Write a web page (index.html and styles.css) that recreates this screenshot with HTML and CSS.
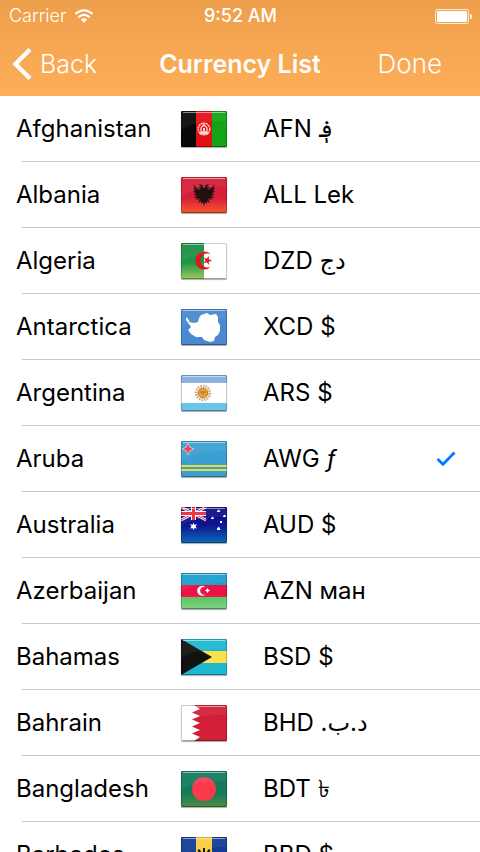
FILE: index.html
```
<!DOCTYPE html>
<html lang="en">
<head>
<meta charset="utf-8">
<meta name="viewport" content="width=device-width, initial-scale=1">
<title>Currency List</title>
<link rel="stylesheet" href="styles.css">
</head>
<body>
<svg class="defs" width="0" height="0" aria-hidden="true">
  <defs>
    <linearGradient id="glow" x1="0" y1="0" x2="0" y2="1">
      <stop offset="0.6" stop-color="#fff" stop-opacity="0"/>
      <stop offset="1" stop-color="#fff" stop-opacity="0.25"/>
    </linearGradient>
    <linearGradient id="red-orange" x1="0" y1="0" x2="0" y2="1">
      <stop offset="0" stop-color="#d31c37"/><stop offset="0.6" stop-color="#d8203a"/><stop offset="1" stop-color="#f4592c"/>
    </linearGradient>
    <linearGradient id="green-lime" x1="0" y1="0" x2="0" y2="1">
      <stop offset="0" stop-color="#158a40"/><stop offset="0.55" stop-color="#229647"/><stop offset="1" stop-color="#9aca5c"/>
    </linearGradient>
    <linearGradient id="navy" x1="0" y1="0" x2="0" y2="1">
      <stop offset="0" stop-color="#0c0c86"/><stop offset="0.5" stop-color="#0e1490"/><stop offset="1" stop-color="#0a6cba"/>
    </linearGradient>
    <linearGradient id="bd-green" x1="0" y1="0" x2="0" y2="1">
      <stop offset="0" stop-color="#107a5e"/><stop offset="0.6" stop-color="#147b58"/><stop offset="1" stop-color="#4d8b42"/>
    </linearGradient>
    <g id="gloss">
      <path d="M0 19Q16 9 46 10V0H0Z" fill="#fff" opacity="0.06"/>
      <path d="M2 1.5H44" stroke="#fff" opacity="0.5"/>
      <rect x="0.5" y="0.5" width="45" height="35" rx="0.5" fill="none" stroke="#000" opacity="0.2"/>
      <path d="M1 35.5H45" stroke="#000" opacity="0.2"/>
    </g>
  </defs>
</svg>
<div class="app">
  <header class="top">
    <div class="status">
      <div class="carrier">
        <span>Carrier</span>
        <svg width="20" height="14" viewBox="0 0 20 14" aria-hidden="true">
          <g fill="none" stroke="#fff" stroke-width="2"><path d="M1.3 5.1Q10 -2.6 18.7 5.1"/><path d="M4.2 8.3Q10 3.4 15.8 8.3"/></g>
          <path d="M6.7 10.5Q10 7.8 13.3 10.5L10 13.8Z" fill="#fff"/>
        </svg>
      </div>
      <time class="time">9:52 AM</time>
      <svg class="battery" width="37" height="15" viewBox="0 0 37 15" aria-hidden="true">
        <rect x="0.5" y="0.5" width="33" height="14" rx="2" fill="none" stroke="#fff" opacity="0.8"/>
        <rect x="2" y="2" width="30" height="11" rx="1" fill="#fff"/>
        <path d="M35 5Q37 5 37 7.5T35 10Z" fill="#fff"/>
      </svg>
    </div>
    <nav class="bar">
      <button class="back" type="button">
        <svg width="20" height="32" viewBox="0 0 20 32" aria-hidden="true"><path d="M18 1.5L3.5 16L18 30.5" fill="none" stroke="#fff" stroke-width="4.4"/></svg>
        <span>Back</span>
      </button>
      <h1 class="title">Currency List</h1>
      <button class="done" type="button">Done</button>
    </nav>
  </header>
  <main class="scroller">
    <ul class="list">
      <li class="item"><button class="row" type="button">
        <span class="name">Afghanistan</span>
        <svg class="flag" viewBox="0 0 46 36" aria-hidden="true">
          <path fill="#080808" d="M0 0H15V36H0Z"/><path fill="#e20f16" d="M15 0H31V36H15Z"/><path fill="#12a316" d="M31 0H46V36H31Z"/>
          <circle cx="23" cy="18" r="5.8" fill="none" stroke="#f6c9bb" stroke-width="1.6" stroke-dasharray="2 .6"/>
          <path d="M20 21V17Q23 12 26 17V21ZM23 14V12M18.500 22.500H27.500" fill="none" stroke="#f9ddd0" stroke-width="1.3"/><path d="M22 17H24V20H22Z" fill="#f9ddd0"/>
          <use href="#gloss"/>
        </svg>
        <span class="money">AFN <bdi>؋</bdi></span>
      </button></li>
      <li class="item"><button class="row" type="button">
        <span class="name">Albania</span>
        <svg class="flag" viewBox="0 0 46 36" aria-hidden="true">
          <path fill="url(#red-orange)" d="M0 0H46V36H0Z"/>
          <path fill="#21100f" d="M23 12L21.500 8L18 7L20 10L17 10L20 13L17 12L12 7L14 11L12 10L14 14L12 14L15 17L12 17L16 19L12 20L17 21L14 23L19 22L17 26L20 24L20 27L22 25L23 30L24 25L26 27L26 24L29 26L27 22L32 23L29 21L34 20L30 19L34 17L31 17L34 14L32 14L34 10L32 11L34 7L29 12L26 13L29 10L26 10L28 7L24.500 8Z"/>
          <use href="#gloss"/>
        </svg>
        <span class="money">ALL Lek</span>
      </button></li>
      <li class="item"><button class="row" type="button">
        <span class="name">Algeria</span>
        <svg class="flag" viewBox="0 0 46 36" aria-hidden="true">
          <path fill="#fff" d="M0 0H46V36H0Z"/><path fill="url(#green-lime)" d="M0 0H23V36H0Z"/>
          <path fill="#e5131d" d="M30 11.500A9 9 0 1 0 30 23.500A7 7 0 1 1 30 11.500Z"/>
          <path fill="#e5131d" d="M31 17.500L27.800 18.700L27.900 22L25.800 19.300L22.800 20.300L24.500 17.500L22.800 14.700L25.800 15.700L27.900 13L27.800 16.300Z"/>
          <use href="#gloss"/>
        </svg>
        <span class="money">DZD <bdi>دج</bdi></span>
      </button></li>
      <li class="item"><button class="row" type="button">
        <span class="name">Antarctica</span>
        <svg class="flag" viewBox="0 0 46 36" aria-hidden="true">
          <path fill="#4a88d0" d="M0 0H46V36H0Z"/>
          <path fill="#fff" d="M5 8L8 11L8 13L13 14L17 13L18 9L20 6L26 4L29 6L35 5L37 8L37 13L39 16L39 22L37 26L34 28L33 32L29 33L23 31L21 28L15 28L10 25L7 21L10 18L8 15L5 11Z"/>
          <use href="#gloss"/>
        </svg>
        <span class="money">XCD $</span>
      </button></li>
      <li class="item"><button class="row" type="button">
        <span class="name">Argentina</span>
        <svg class="flag" viewBox="0 0 46 36" aria-hidden="true">
          <path fill="#fff" d="M0 0H46V36H0Z"/><path fill="#86afe0" d="M0 0H46V8H0Z"/><path fill="#6bc5e9" d="M0 28H46V36H0Z"/>
          <circle cx="22" cy="18" r="6.700" fill="none" stroke="#d9a976" stroke-width="3" stroke-dasharray="1.600 1"/>
          <circle cx="22" cy="18" r="4.700" fill="#e8a23c" stroke="#b8752c"/><path d="M19 17H25M22 17V20" stroke="#b06e22" fill="none"/>
          <use href="#gloss"/>
        </svg>
        <span class="money">ARS $</span>
      </button></li>
      <li class="item"><button class="row" type="button" aria-pressed="true">
        <span class="name">Aruba</span>
        <svg class="flag" viewBox="0 0 46 36" aria-hidden="true">
          <path fill="#3c9fd2" d="M0 0H46V36H0Z"/><path fill="#edde3b" d="M0 24H46V26H0ZM0 28H46V30H0Z"/>
          <path fill="#f43746" stroke="#fff" stroke-width=".5" d="M7 2L8.800 6.200L13 8L8.800 9.800L7 14L5.200 9.800L1 8L5.200 6.200Z"/>
          <use href="#gloss"/>
        </svg>
        <span class="money">AWG <bdi class="florin">ƒ</bdi></span>
        <svg class="check" width="20" height="16" viewBox="0 0 20 16" aria-hidden="true"><path d="M1.500 8L7 13.300L18.500 1.500" fill="none" stroke="#007aff" stroke-width="2.800"/></svg>
      </button></li>
      <li class="item"><button class="row" type="button">
        <span class="name">Australia</span>
        <svg class="flag" viewBox="0 0 46 36" aria-hidden="true">
          <path fill="url(#navy)" d="M0 0H46V36H0Z"/>
          <path d="M0 0L25 13M25 0L0 13" stroke="#fff" stroke-width="2.600"/><path d="M0 0L25 13M25 0L0 13" stroke="#e8202c"/>
          <path d="M12.500 0V13M0 6.500H25" stroke="#fff" stroke-width="5"/><path d="M12.500 0V13M0 6.500H25" stroke="#ef2b38" stroke-width="3"/>
          <path fill="#fff" d="M12.500 15.500L13.500 18L16 17L14.500 19.500L16 21.500L13.500 21L12.500 23L11.500 21L9 21.500L10.500 19.500L9 17L11.500 18Z"/>
          <path fill="#fff" d="M36 4L38 2.500L39.500 5H36ZM30 11L32 9.500L33 12H30ZM42 9L44 7.500L45 10H42ZM36 21.500L38 19.500L39.500 23H36ZM39 14H41V16H39Z"/>
          <use href="#gloss"/>
        </svg>
        <span class="money">AUD $</span>
      </button></li>
      <li class="item"><button class="row" type="button">
        <span class="name">Azerbaijan</span>
        <svg class="flag" viewBox="0 0 46 36" aria-hidden="true">
          <path fill="#1b9fcc" d="M0 0H46V12H0Z"/><path fill="#ed1245" d="M0 12H46V24H0Z"/><path fill="#55c25c" d="M0 24H46V36H0Z"/>
          <path fill="#fff" d="M24.500 14A5 5 0 1 0 24.500 21.500A4 4 0 1 1 24.500 14Z"/>
          <path fill="#fff" d="M26.500 15L27.300 16.500L29.200 17.500L27.300 18.500L26.500 20.200L25.500 18.500L24 17.500L25.500 16.500Z"/>
          <path fill="url(#glow)" d="M0 0H46V36H0Z"/><use href="#gloss"/>
        </svg>
        <span class="money">AZN ман</span>
      </button></li>
      <li class="item"><button class="row" type="button">
        <span class="name">Bahamas</span>
        <svg class="flag" viewBox="0 0 46 36" aria-hidden="true">
          <path fill="#1db7d2" d="M0 0H46V36H0Z"/><path fill="#fce04c" d="M0 12H46V24H0Z"/><path fill="#111" d="M0 0L31 18L0 36Z"/>
          <use href="#gloss"/>
        </svg>
        <span class="money">BSD $</span>
      </button></li>
      <li class="item"><button class="row" type="button">
        <span class="name">Bahrain</span>
        <svg class="flag" viewBox="0 0 46 36" aria-hidden="true">
          <path fill="#fff" d="M0 0H46V36H0Z"/>
          <path fill="#d21f35" d="M13 0H46V36H13L19 32L11 28.500L19 25L11 21.500L19 18L11 14.500L19 11L11 7.500L19 4Z"/>
          <use href="#gloss"/>
        </svg>
        <span class="money">BHD <bdi dir="rtl">د.ب.</bdi></span>
      </button></li>
      <li class="item"><button class="row" type="button">
        <span class="name">Bangladesh</span>
        <svg class="flag" viewBox="0 0 46 36" aria-hidden="true">
          <path fill="url(#bd-green)" d="M0 0H46V36H0Z"/><circle cx="23" cy="18" r="12" fill="#f73b4d"/>
          <use href="#gloss"/>
        </svg>
        <span class="money">BDT <bdi>৳</bdi></span>
      </button></li>
      <li class="item"><button class="row" type="button">
        <span class="name">Barbados</span>
        <svg class="flag" viewBox="0 0 46 36" aria-hidden="true">
          <path fill="#123b93" d="M0 0H46V36H0Z"/><path fill="#fdcb3e" d="M15 0H31V36H15Z"/>
          <path d="M17 13Q20 14 19.500 20H26.500Q26 14 29 13M23 11V27" fill="none" stroke="#111" stroke-width="2"/>
          <use href="#gloss"/>
        </svg>
        <span class="money">BBD $</span>
      </button></li>
    </ul>
  </main>
</div>
</body>
</html>
```
FILE: styles.css
```
* { box-sizing: border-box; }

body {
  margin: 0;
  background: #fff;
  color: #000;
  font-family: Inter, "DejaVu Sans", sans-serif;
}

button {
  border: 0;
  padding: 0;
  background: none;
  color: inherit;
  font: inherit;
  cursor: pointer;
}

.defs { position: absolute; }

.app {
  display: flex;
  flex-direction: column;
  height: 100vh;
}

.top {
  flex: none;
  background: linear-gradient(#ee9f4b, #f9a853 60%, #fdac57);
  color: #fff;
}

.status {
  display: grid;
  grid-template-columns: 1fr auto 1fr;
  align-items: center;
  height: 32px;
  padding: 0 8px 0 9px;
  font-size: 18px;
  line-height: 24px;
}

.carrier {
  display: flex;
  align-items: center;
  gap: 8px;
  font-weight: 300;
}

.time { font-weight: 500; }

.battery { justify-self: end; }

.bar {
  display: grid;
  grid-template-columns: 1fr auto 1fr;
  align-items: center;
  height: 64px;
  padding: 0 12px;
  font-size: 25px;
  font-weight: 300;
  line-height: 30px;
}

.back {
  display: flex;
  align-items: center;
  gap: 8px;
}

.title {
  margin: 0;
  font-size: 25px;
  font-weight: 600;
}

.done {
  justify-self: end;
  padding-right: 26px;
  font-size: 26px;
}

.scroller {
  flex: 1;
  min-height: 0;
  overflow-y: auto;
  scrollbar-width: none;
}

.list {
  margin: 0;
  padding: 0;
  list-style: none;
}

.item {
  height: 66px;
  background: linear-gradient(#c8c7cc, #c8c7cc) 22px 100% / 100% 1px no-repeat;
}

.row {
  display: grid;
  grid-template-columns: 165px 46px 1fr auto;
  align-items: center;
  width: 100%;
  height: 66px;
  padding: 0 24px 0 16px;
  font-size: 24px;
  line-height: 30px;
  text-align: left;
}

.flag {
  width: 46px;
  height: 36px;
  border-radius: 1px;
  box-shadow: 0 1px 1px #0005;
}

.money { padding-left: 36px; }

.florin { font-style: italic; }
```
